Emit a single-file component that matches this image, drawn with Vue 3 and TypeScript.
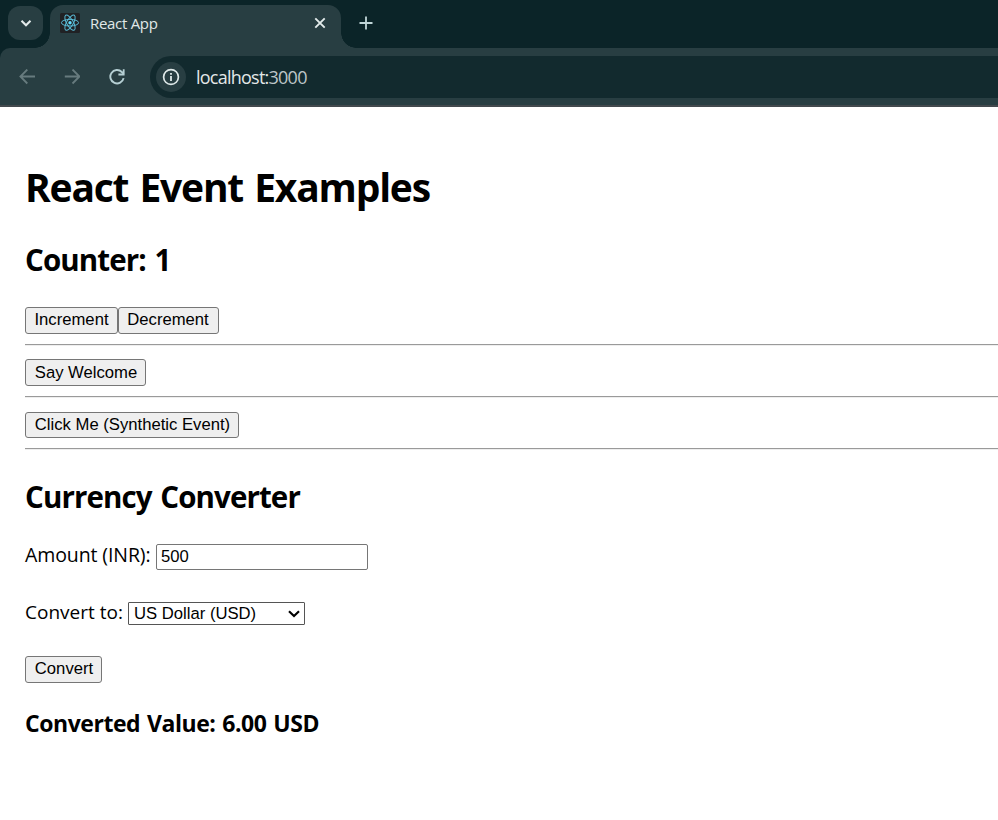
<script setup lang="ts">
import { ref } from 'vue'

const count = ref(1)
const amount = ref('500')
const currency = ref('USD')
const rates: Record<string, number> = { USD: 0.012, EUR: 0.011 }
const result = ref('6.00 USD')

function convert(): void {
  result.value = `${(Number(amount.value) * rates[currency.value]).toFixed(2)} ${currency.value}`
}
</script>

<template>
  <div class="window">
    <header class="chrome">
      <div class="tabstrip">
        <div class="search-tabs">
          <svg width="36" height="34" viewBox="0 0 36 34"><path d="M13.5 14.8l4.5 4.4 4.5-4.4" fill="none" stroke="#e3ebeb" stroke-width="2.1" /></svg>
        </div>
        <div class="tab">
          <svg class="favicon" width="20" height="20" viewBox="0 0 20 20">
            <rect width="20" height="20" rx="1.5" fill="#202124" />
            <g fill="none" stroke="#58b9d4" stroke-width="1">
              <ellipse cx="10" cy="9.7" rx="8.6" ry="3.3" />
              <ellipse cx="10" cy="9.7" rx="8.6" ry="3.3" transform="rotate(60 10 9.7)" />
              <ellipse cx="10" cy="9.7" rx="8.6" ry="3.3" transform="rotate(120 10 9.7)" />
            </g>
            <circle cx="10" cy="9.7" r="1.7" fill="#61dafb" />
          </svg>
          <span class="tab-title">React App</span>
          <svg class="close" width="12" height="12" viewBox="0 0 12 12"><path d="M1.3 1.3l9.4 9.4M10.7 1.3L1.3 10.7" stroke="#e3ebeb" stroke-width="1.9" /></svg>
        </div>
        <svg class="new-tab" width="14" height="14" viewBox="0 0 14 14"><path d="M7 .5v13M.5 7h13" stroke="#c0d6d8" stroke-width="1.8" /></svg>
      </div>
      <div class="toolbar">
        <svg class="nav" width="16" height="16" viewBox="0 0 16 16"><path d="M16 7.5H1.8M8.3.5L1.4 7.5l6.9 7" fill="none" stroke="#677b7e" stroke-width="1.8" /></svg>
        <svg class="nav" width="16" height="16" viewBox="0 0 16 16"><path d="M.8 7.5H15M8.5.5l6.9 7-6.9 7" fill="none" stroke="#677b7e" stroke-width="1.8" /></svg>
        <svg class="nav" width="16" height="16" viewBox="0 0 16 16"><path d="M14.6 9.1A6.7 6.7 0 1 1 12.8 3L14.6 4.8" fill="none" stroke="#b5cfd3" stroke-width="1.9" /><path d="M15.6.2v6.2H9.4V4.6h4.4V.2z" fill="#b5cfd3" /></svg>
        <div class="address">
          <div class="info">
            <svg width="18" height="18" viewBox="0 0 18 18"><circle cx="9" cy="9" r="7.4" fill="none" stroke="#dfe9e9" stroke-width="1.7" /><path d="M9 8v5M9 5v1.8" stroke="#dfe9e9" stroke-width="1.8" /></svg>
          </div>
          <span class="url">localhost:<span class="port">3000</span></span>
        </div>
      </div>
    </header>

    <main class="page">
      <h1>React Event Examples</h1>
      <h2>Counter: {{ count }}</h2>
      <div class="row">
        <button class="increment" @click="count++">Increment</button>
        <button class="decrement" @click="count--">Decrement</button>
      </div>
      <hr />
      <button class="welcome">Say Welcome</button>
      <hr />
      <button class="synthetic">Click Me (Synthetic Event)</button>
      <hr />
      <h2 class="converter-title">Currency Converter</h2>
      <label class="field amount-field">
        <span class="amount-label">Amount (INR):</span>
        <input v-model="amount" type="text" />
      </label>
      <label class="field currency-field">
        <span class="currency-label">Convert to:</span>
        <span class="select-wrap">
          <select v-model="currency">
            <option value="USD">US Dollar (USD)</option>
            <option value="EUR">Euro (EUR)</option>
          </select>
          <svg class="arrow" width="12" height="8" viewBox="0 0 12 8"><path d="M1 1.2l5 4.9 5-4.9" fill="none" stroke="#000" stroke-width="2.1" /></svg>
        </span>
      </label>
      <button class="convert" @click="convert">Convert</button>
      <h3>Converted Value: {{ result }}</h3>
    </main>
  </div>
</template>

<style>
body {
  margin: 0;
  background: #fff;
}
</style>

<style scoped>
* {
  box-sizing: border-box;
}
.window {
  width: 100%;
  height: 820px;
  overflow: hidden;
  font-family: "Open Sans", "Noto Sans", sans-serif;
  color: #000;
}
svg {
  display: block;
  flex: none;
}
.chrome {
  height: 107px;
  background: #0b2428;
  border-bottom: 2px solid #42494d;
}
.tabstrip {
  display: flex;
  height: 48px;
}
.search-tabs {
  width: 35px;
  height: 34px;
  margin: 6px 7px 0 8px;
  border-radius: 12px;
  background: #283e42;
}
.tab {
  position: relative;
  display: flex;
  width: 291px;
  height: 43px;
  margin-top: 5px;
  padding: 8px 15px 0 10px;
  border-radius: 13px 13px 0 0;
  background: #283e42;
}
.tab::before,
.tab::after {
  content: "";
  position: absolute;
  bottom: 0;
  width: 15px;
  height: 15px;
}
.tab::before {
  left: -15px;
  background: radial-gradient(circle at 0 0, transparent 14.5px, #283e42 15px);
}
.tab::after {
  right: -15px;
  background: radial-gradient(circle at 100% 0, transparent 14.5px, #283e42 15px);
}
.tab-title {
  margin-left: 10px;
  line-height: 20px;
  font-size: 15px;
  letter-spacing: -0.3px;
  color: #e0e8e8;
  white-space: nowrap;
}
.close {
  margin: 4px 0 0 auto;
}
.new-tab {
  margin: 16px 0 0 18px;
}
.toolbar {
  display: flex;
  height: 57px;
  padding: 8px 0 7px 19px;
  border-top-left-radius: 10px;
  background: #283e42;
}
.nav {
  margin: 13px 29px 0 0;
}
.nav:nth-child(3) {
  margin-right: 25px;
}
.address {
  display: flex;
  flex: 1;
  align-items: center;
  height: 42px;
  padding-left: 6px;
  border-radius: 21px 0 0 21px;
  background: #122a2e;
}
.info {
  display: grid;
  place-items: center;
  width: 30px;
  height: 30px;
  border-radius: 50%;
  background: #283e42;
}
.url {
  margin-left: 10px;
  font-size: 18px;
  letter-spacing: -0.76px;
  color: #e3e8e8;
}
.port {
  color: #bdc6c8;
}
.page {
  display: flow-root;
  padding-left: 25px;
}
h1,
h2,
h3 {
  margin: 0;
  font-weight: 700;
  white-space: nowrap;
}
h1 {
  margin-top: 53px;
  font-size: 39px;
  line-height: 54px;
  letter-spacing: -1.2px;
  word-spacing: 2.2px;
}
h2 {
  margin-top: 26px;
  font-size: 29.5px;
  line-height: 40px;
  letter-spacing: -0.9px;
  word-spacing: 2px;
}
.row {
  display: flex;
  margin-top: 27px;
}
button {
  display: block;
  height: 27px;
  padding: 0 0 1px;
  border: 1px solid #767676;
  border-radius: 3px;
  background: #efefef;
  color: #000;
  font: 16.667px/23px "Liberation Sans", Arial, sans-serif;
  white-space: nowrap;
}
.increment {
  width: 93px;
  padding-bottom: 2px;
}
.decrement {
  width: 101px;
  padding: 0 1px 2px 0;
}
.welcome {
  width: 121px;
  padding-left: 1px;
}
.synthetic {
  width: 214px;
  height: 26px;
  padding-left: 1px;
}
.convert {
  width: 77px;
  margin-top: 31px;
  padding: 0 0 2px 1px;
}
hr {
  height: 2px;
  margin: 10px 0 13px;
  border: 0;
  border-top: 1px solid #9a9a9a;
  border-bottom: 1px solid #eee;
}
.welcome + hr {
  margin-bottom: 14px;
}
h2.converter-title {
  margin-top: 27px;
}
.field {
  display: flex;
  font-size: 19px;
  line-height: 26px;
  white-space: nowrap;
}
.amount-field {
  margin-top: 27px;
}
.amount-label {
  width: 131px;
  margin-top: -2px;
  font-size: 19.5px;
  letter-spacing: -0.1px;
}
input {
  width: 212px;
  height: 26px;
  padding: 0 4px 1px;
  border: 1px solid #767676;
  border-radius: 2px;
  outline: 0;
  background: #fff;
  color: #000;
  font: 16.667px "Liberation Sans", Arial, sans-serif;
}
.currency-field {
  height: 23px;
  margin-top: 32px;
}
.currency-label {
  width: 103px;
  margin-top: -3px;
}
.select-wrap {
  position: relative;
}
select {
  display: block;
  width: 177px;
  height: 23px;
  padding: 0 5px;
  appearance: none;
  border: 1px solid #555;
  border-radius: 1px;
  background: #fff;
  color: #000;
  font: 16.667px "Liberation Sans", Arial, sans-serif;
}
.arrow {
  position: absolute;
  right: 5px;
  top: 8px;
  pointer-events: none;
}
h3 {
  margin-top: 24px;
  font-size: 23px;
  line-height: 32px;
  letter-spacing: -0.45px;
  word-spacing: 1.3px;
}
</style>
